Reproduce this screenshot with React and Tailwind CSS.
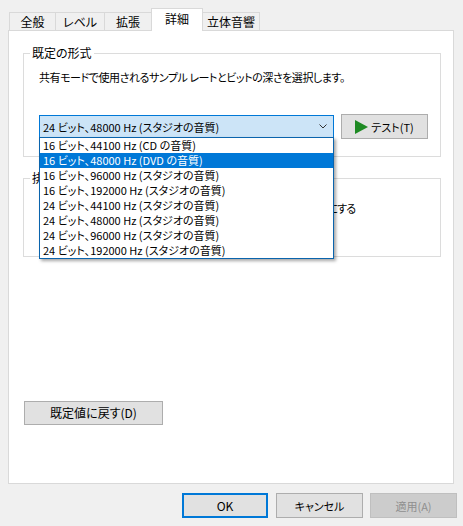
import React from "react";

const tabs = [
    { label: "全般", w: "w-[47px]" },
    { label: "レベル", w: "w-[50px]" },
    { label: "拡張", w: "w-[48px]" },
    { label: "詳細", w: "w-[52px]", active: true },
    { label: "立体音響", w: "w-[58px]" },
];

const formats = [
    "16 ビット、44100 Hz (CD の音質)",
    "16 ビット、48000 Hz (DVD の音質)",
    "16 ビット、96000 Hz (スタジオの音質)",
    "16 ビット、192000 Hz (スタジオの音質)",
    "24 ビット、44100 Hz (スタジオの音質)",
    "24 ビット、48000 Hz (スタジオの音質)",
    "24 ビット、96000 Hz (スタジオの音質)",
    "24 ビット、192000 Hz (スタジオの音質)",
];

export default function App() {
    return (
        <div className="w-[463px] h-[526px] bg-[#f0f0f0] pt-[8px] text-[12px] leading-[16px] text-black font-['Noto_Sans_CJK_JP','Noto_Sans',sans-serif] [font-feature-settings:'palt'] overflow-hidden">
            {/* tabs */}
            <div className="flex items-end h-[22px] pl-[9px]">
                {tabs.map((t, i) => (
                    <div
                        key={t.label}
                        className={
                            t.active
                                ? `${t.w} -ml-px -mb-px h-[23px] relative z-10 bg-white border border-b-0 border-[#d9d9d9] flex items-center justify-center pb-[3px]`
                                : `${t.w} ${i > 0 ? "-ml-px" : ""} h-[18px] bg-[#f0f0f0] border border-b-0 border-[#d9d9d9] flex items-center justify-center`
                        }
                    >
                        {t.label}
                    </div>
                ))}
            </div>

            {/* panel */}
            <div className="ml-[8px] w-[446px] h-[454px] border border-[#d9d9d9] bg-white pl-[14px] pt-[22px]">
                {/* 既定の形式 */}
                <div className="relative w-[418px] h-[104px] border border-[#dcdcdc] pl-[15px] pt-[15px]">
                    <span className="absolute left-[6px] -top-[9px] px-[2px] bg-white">既定の形式</span>
                    <p className="whitespace-nowrap text-[11px] tracking-[-0.45px]">
                        共有モードで使用されるサンプル レートとビットの深さを選択します。
                    </p>
                    <div className="flex items-center mt-[29px]">
                        <div className="relative z-20 w-[295px] h-[23px] border border-[#0078d7] bg-[#cce4f7] flex items-center justify-between pl-[3px] pr-[6px] text-[11px]">
                            <span className="whitespace-nowrap">24 ビット、48000 Hz (スタジオの音質)</span>
                            <svg width="8" height="5" viewBox="0 0 8 5">
                                <polyline points="0.5,0.5 4,4 7.5,0.5" fill="none" stroke="#333" strokeWidth="1" />
                            </svg>
                            <ul className="absolute left-[-1px] top-[21px] w-[295px] border border-[#0a64ad] bg-white shadow-[2px_2px_3px_rgba(0,0,0,0.35)]">
                                {formats.map((f, i) => (
                                    <li
                                        key={f}
                                        className={`h-[15px] leading-[15px] pl-[3px] whitespace-nowrap ${
                                            i === 1 ? "bg-[#0078d7] text-white" : ""
                                        }`}
                                    >
                                        {f}
                                    </li>
                                ))}
                            </ul>
                        </div>
                        <button className="ml-[7px] w-[87px] h-[25px] border border-[#adadad] bg-[#e1e1e1] flex items-center justify-center gap-[3px] text-[11px]">
                            <svg width="13" height="14" viewBox="0 0 13 14">
                                <polygon points="0,0 13,7 0,14" fill="#1e8a23" />
                            </svg>
                            <span>テスト(T)</span>
                        </button>
                    </div>
                </div>

                {/* 排他モード */}
                <div className="relative mt-[21px] w-[418px] h-[79px] border border-[#dcdcdc] pl-[16px] pt-[21px] text-[11px]">
                    <span className="absolute left-[6px] -top-[9px] px-[2px] bg-white text-[12px]">排他モード</span>
                    <div className="flex items-center gap-[6px] h-[16px]">
                        <span className="w-[13px] h-[13px] border border-[#333] bg-white" />
                        <span className="whitespace-nowrap tracking-[-0.8px]">
                            アプリケーションによりこのデバイスを排他的に制御できるようにする
                        </span>
                    </div>
                    <div className="flex items-center gap-[6px] h-[16px] mt-[6px]">
                        <span className="w-[13px] h-[13px] border border-[#333] bg-white" />
                        <span className="whitespace-nowrap tracking-[-0.8px]">排他モードのアプリケーションを優先する</span>
                    </div>
                </div>

                <button className="ml-px mt-[144px] w-[139px] h-[24px] border border-[#adadad] bg-[#e1e1e1]">
                    既定値に戻す(D)
                </button>
            </div>

            {/* dialog buttons */}
            <div className="flex justify-end mt-[9px] pr-[6px] text-[11px]">
                <button className="w-[86px] h-[25px] border-2 border-[#0078d7] bg-[#e1e1e1] text-[12px]">OK</button>
                <button className="ml-[8px] w-[87px] h-[25px] border border-[#adadad] bg-[#e1e1e1]">キャンセル</button>
                <button className="ml-[7px] w-[87px] h-[25px] border border-[#bfbfbf] bg-[#cccccc] text-[#8f8f8f]">適用(A)</button>
            </div>
        </div>
    );
}
